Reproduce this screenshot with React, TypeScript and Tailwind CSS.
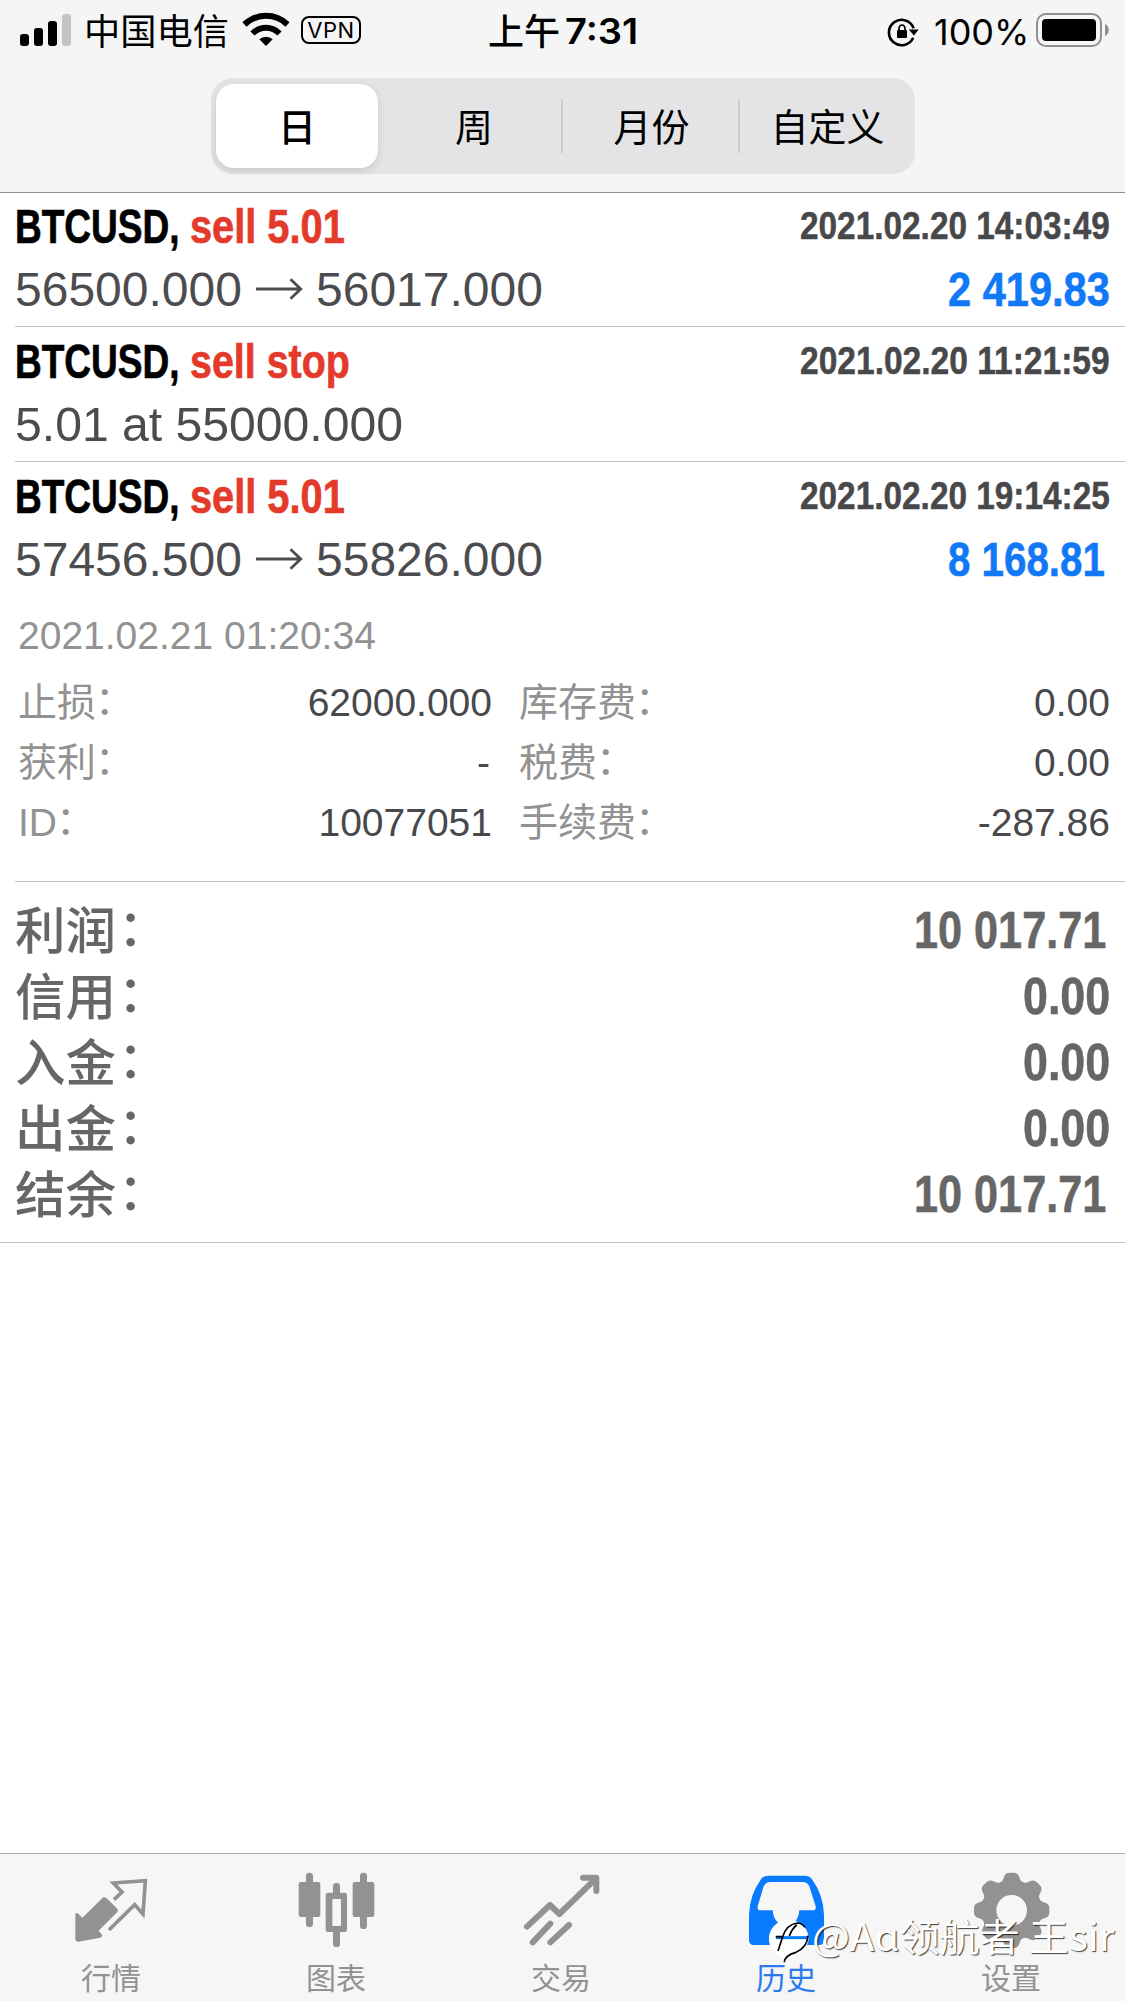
import React, { useLayoutEffect, useRef, useState } from "react";

const CJK = "font-['Noto_Sans_CJK_SC',sans-serif]";

/** One line of text squeezed or stretched horizontally to a given advance width. */
function Fit({ w, className = "", children }: { w: number; className?: string; children: React.ReactNode }) {
  const ref = useRef<HTMLSpanElement>(null);
  const [scale, setScale] = useState(1);
  useLayoutEffect(() => {
    if (ref.current && ref.current.offsetWidth) setScale(w / ref.current.offsetWidth);
  }, [w]);
  return (
    <span className="block shrink-0" style={{ width: w }}>
      <span
        ref={ref}
        className={`inline-block origin-left whitespace-pre ${className}`}
        style={{ transform: `scaleX(${scale})` }}
      >
        {children}
      </span>
    </span>
  );
}

function StatusBar() {
  return (
    <div className="flex h-[60px] items-start">
      <svg className="ml-5 mt-[14px] h-8 w-[51px]" viewBox="0 0 51 32">
        <rect x="0" y="20" width="9" height="12" rx="3" />
        <rect x="14" y="14" width="9" height="18" rx="3" />
        <rect x="28" y="7" width="9" height="25" rx="3" />
        <rect x="42" y="0" width="9" height="32" rx="3" fill="#c4c4c4" />
      </svg>
      <div className={`${CJK} ml-[13px] h-[60px]`}>
        <Fit w={145} className="text-[36px] leading-[59px]">中国电信</Fit>
      </div>
      <svg className="ml-[13px] mt-[12px] h-[35px] w-[48px]" viewBox="0 0 48 35" fill="none" stroke="#000">
        <path d="M2.5 12.5 A31 31 0 0 1 45.5 12.5" strokeWidth="6" />
        <path d="M10.5 21.5 A19 19 0 0 1 37.5 21.5" strokeWidth="6" />
        <path d="M24 34 L17.3 27.3 A9.8 9.8 0 0 1 30.7 27.3 Z" fill="#000" stroke="none" />
      </svg>
      <div className="ml-[11px] mt-4 flex h-7 w-[60px] items-center justify-center rounded-[8px] border-2 border-black font-[Inter,sans-serif] text-[22px] leading-none tracking-[0.5px]">
        VPN
      </div>
      <div className={`${CJK} ml-[127px] text-[36px] font-medium leading-[59px]`}>上午</div>
      <div className="ml-[5px] font-[Inter,sans-serif] leading-[63px]">
        <Fit w={73} className="text-[35px] font-semibold leading-[63px]">7:31</Fit>
      </div>
      <svg className="ml-[249px] mt-[17px] h-[30px] w-[33px]" viewBox="0 0 33 30" fill="none" stroke="#000">
        <path d="M26.6 11.2 A12.7 12.7 0 1 0 26.2 20.8" strokeWidth="2.6" />
        <path d="M21.8 12.5 H31.7 L26.9 18.5 Z" fill="#000" stroke="none" />
        <rect x="10" y="13" width="10" height="8" rx="1" fill="#000" stroke="none" />
        <path d="M12 14 V11.5 A3 3.5 0 0 1 18 11.5 V14" strokeWidth="1.7" />
      </svg>
      <div className="ml-[14px] font-[Inter,sans-serif] leading-[64px]">
        <Fit w={95} className="text-[36px] leading-[64px]">100%</Fit>
      </div>
      <div className="ml-[7px] mt-[13px] h-[34px] w-[66px] rounded-[10px] border-2 border-[#8f8f8f] p-1">
        <div className="h-[22px] w-[54px] rounded-[4px] bg-black" />
      </div>
      <svg className="ml-[3px] mt-[24px] h-3 w-1" viewBox="0 0 4 12">
        <path d="M0 0 C5 2 5 10 0 12 Z" fill="#8f8f8f" />
      </svg>
    </div>
  );
}

function Segments() {
  return (
    <div className={`${CJK} ml-[211px] mt-[18px] flex h-24 w-[704px] items-center rounded-[22px] bg-[#e4e4e6] text-[38px] leading-[60px]`}>
      <div className="ml-[5px] flex h-[84px] w-[162px] items-center justify-center rounded-[18px] bg-white pb-[3px] font-medium shadow-[0_3px_8px_rgba(0,0,0,0.12)]">
        日
      </div>
      <div className="flex w-[183px] items-center justify-center pb-[3px] pl-[9px]">周</div>
      <div className="h-[54px] w-[2px] bg-[#cbcbce]" />
      <div className="flex w-[175px] items-center justify-center pb-[3px] pl-[2px]">月份</div>
      <div className="h-[54px] w-[2px] bg-[#cbcbce]" />
      <div className="flex w-[175px] items-center justify-center pb-[3px]">自定义</div>
    </div>
  );
}

type Trade = {
  action: string;
  actionW: number;
  time: string;
  from?: string;
  to?: string;
  note?: string;
  profit?: string;
  profitW?: number;
};

function TradeLines({ t }: { t: Trade }) {
  return (
    <>
      <div className="flex h-[66px] justify-between pr-[15px]">
        <div className="flex text-[49px] font-bold leading-[66px]">
          <Fit w={174.5} className="text-black [-webkit-text-stroke:0.7px_#000]">{"BTCUSD, "}</Fit>
          <Fit w={t.actionW} className="text-[#e33a2b] [-webkit-text-stroke:0.7px_#e33a2b]">{t.action}</Fit>
        </div>
        <Fit w={310} className="text-[39.5px] font-bold leading-[65px] text-[#48484b] [-webkit-text-stroke:0.5px_#48484b]">{t.time}</Fit>
      </div>
      <div className="flex h-[60px] text-[48px] leading-[62px] text-[#4c4c4f]">
        {t.note ? (
          <Fit w={388}>{t.note}</Fit>
        ) : (
          <div className="flex">
            <Fit w={227}>{t.from}</Fit>
            <svg className="ml-[14px] mt-[19px] h-[22px] w-[47px]" viewBox="0 0 47 22" fill="none" stroke="#4c4c4f" strokeWidth="2.8">
              <path d="M0 11 H44.5 M34.5 1.3 L44.7 11 L34.5 20.7" />
            </svg>
            <div className="ml-[13px]">
              <Fit w={227}>{t.to}</Fit>
            </div>
          </div>
        )}
        {t.profit && (
          <div className="ml-auto w-[177px] leading-[60px]">
            <Fit w={t.profitW ?? 162} className="text-[49px] font-bold text-[#1279f6] [-webkit-text-stroke:0.6px_#1279f6]">{t.profit}</Fit>
          </div>
        )}
      </div>
    </>
  );
}

const details = [
  ["止损", "62000.000", "库存费", "0.00"],
  ["获利", "-", "税费", "0.00"],
  ["ID", "10077051", "手续费", "-287.86"],
];

const totals: [string, string, number][] = [
  ["利润", "10 017.71", 192],
  ["信用", "0.00", 87],
  ["入金", "0.00", 87],
  ["出金", "0.00", 87],
  ["结余", "10 017.71", 192],
];

const label = "font-['Liberation_Sans','Noto_Sans_CJK_SC',sans-serif] text-[#929292]";

function DetailLabel({ text }: { text: string }) {
  return (
    <div className={`${label} w-[200px]`}>
      {text}
      <span className="inline-block -translate-x-px -translate-y-[2px]">：</span>
    </div>
  );
}

function History() {
  return (
    <div className="font-['Liberation_Sans',sans-serif]">
      <div className="ml-[15px] h-[133px]">
        <TradeLines t={{ action: "sell 5.01", actionW: 155, time: "2021.02.20 14:03:49", from: "56500.000", to: "56017.000", profit: "2 419.83" }} />
      </div>
      <div className="ml-[15px] h-[135px] border-t border-[#c2c2c4] pt-px">
        <TradeLines t={{ action: "sell stop", actionW: 160, time: "2021.02.20 11:21:59", note: "5.01 at 55000.000" }} />
      </div>
      <div className="ml-[15px] h-[420px] border-t border-[#c2c2c4] pt-px">
        <TradeLines t={{ action: "sell 5.01", actionW: 155, time: "2021.02.20 19:14:25", from: "57456.500", to: "55826.000", profit: "8 168.81", profitW: 157 }} />
        <div className="pl-[3px] pt-[17px] text-[39px] leading-[60px] text-[#929292]">2021.02.21 01:20:34</div>
        <div className="mt-[7px] text-[39px] leading-[60px] text-[#48484b]">
          {details.map(([a, b, c, d]) => (
            <div key={a} className="flex h-[60px] pl-[3px]">
              <DetailLabel text={a} />
              <div className={b === "-" ? "w-[274px] pr-[2px] text-right" : "w-[274px] text-right"}>{b}</div>
              <div className="ml-[27px]">
                <DetailLabel text={c} />
              </div>
              <div className="flex-1 pr-[15px] text-right">{d}</div>
            </div>
          ))}
        </div>
      </div>
      <div className="ml-[15px] h-px bg-[#c2c2c4]" />
      <div className="flex h-[361px] flex-col border-b border-[#c2c2c4] pl-[15px] pt-[13px] text-[#666]">
        {totals.map(([name, value, w]) => (
          <div key={name} className="flex h-[66px] justify-between leading-[64px]">
            <div className={`${CJK} text-[50.5px] font-medium`}>
              {name}
              <span className="inline-block translate-x-[2px] -translate-y-[3px]">：</span>
            </div>
            <div className={w > 100 ? "pr-[19px]" : "pr-[15px]"}>
              <Fit w={w} className="pt-[3px] text-[52px] font-bold [-webkit-text-stroke:0.6px_#666]">{value}</Fit>
            </div>
          </div>
        ))}
      </div>
    </div>
  );
}

const gearTeeth = [0, 45, 90, 135, 180, 225, 270, 315];

const tabs = [
  {
    name: "行情",
    box: "0 42 675 330",
    icon: (
      <g>
        <path d="M310 172 Q315 170 320 175 L352 206 Q356 211 352 216 L296 272 L306 284 Q308 291 300 293 L236 305 Q226 305 226 297 V222 Q230 216 235 221 L247 233 Z" fill="#929292" />
        <path d="M342 179 L366 156 L340 129 L436 122 L429 222 L404 194 L327 270" fill="none" stroke="#929292" strokeWidth="11" />
      </g>
    ),
  },
  {
    name: "图表",
    box: "675 42 675 330",
    icon: (
      <g fill="#929292">
        <rect x="918" y="98" width="21" height="163" rx="10" />
        <rect x="896" y="126" width="65" height="105" rx="7" />
        <rect x="1080" y="98" width="21" height="169" rx="10" />
        <rect x="1058" y="126" width="65" height="105" rx="7" />
        <rect x="999" y="129" width="21" height="192" rx="10" />
        <rect x="977" y="158" width="64" height="118" rx="7" />
        <rect x="997" y="177" width="26" height="81" rx="3" fill="#f6f6f6" />
      </g>
    ),
  },
  {
    name: "交易",
    box: "-90 42 675 330",
    icon: (
      <g fill="none" stroke="#929292" strokeWidth="18" strokeLinecap="round" strokeLinejoin="round">
        <path d="M141 260 L210 195 L238 222 L345 118" />
        <path d="M309 113 H349 V153" />
        <path d="M158 307 L211 251 M211 307 L267 255" />
      </g>
    ),
  },
  {
    name: "历史",
    box: "585 42 675 330",
    icon: (
      <path
        fillRule="evenodd"
        fill="#0a7aff"
        d="M866 107 H974 Q990 107 997 119 Q1030 165 1032 224 V300 Q1032 315 1017 315 H822 Q807 315 807 300 V224 Q809 165 842 119 Q849 107 866 107 Z M872 126 Q857 126 851 139 L833 199 Q831 211 842 211 H878 Q882 254 918 257 Q954 254 958 211 H998 Q1009 211 1007 199 L988 139 Q982 126 968 126 Z"
      />
    ),
  },
  {
    name: "设置",
    box: "510 42 675 330",
    icon: (
      <g>
        <circle cx="845" cy="211" r="91" fill="#929292" />
        {gearTeeth.map((a) => (
          <path key={a} transform={`rotate(${a} 845 211)`} d="M802 135 Q818 128 822 111 Q826 98 838 98 H852 Q864 98 868 111 Q872 128 888 135 Z" fill="#929292" />
        ))}
        <circle cx="845" cy="211" r="46" fill="#f6f6f6" />
      </g>
    ),
  },
];

function TabBar() {
  return (
    <div className="relative flex h-[148px] border-t border-[#b0b0b2] bg-[#f6f6f6]">
      {tabs.map((t) => (
        <div key={t.name} className="w-[225px]">
          <svg className="block h-[110px] w-[225px]" viewBox={t.box}>{t.icon}</svg>
          <div className={`${CJK} -mt-[10px] pr-[3px] text-center text-[30px] leading-[44px] ${t.name === "历史" ? "text-[#2b7bef]" : "text-[#929292]"}`}>
            {t.name}
          </div>
        </div>
      ))}
      <div className="absolute left-[769px] top-[62px] flex items-start text-white">
        <svg className="h-[48px] w-[42px]" viewBox="867 228 126 144">
          <path d="M930 240 A57 57 0 0 1 986 297 Q980 340 935 353 Q918 358 913 369 L910 352 A57 57 0 0 1 930 240 Z" fill="#fff" />
          <path d="M888 293 H982" stroke="#0a7aff" strokeWidth="9" />
          <path d="M887 290 H906 M894 333 L908 290 Q920 253 952 249 Q966 249 975 262 M928 288 Q934 270 950 254 M984 287 Q982 322 948 337 Q914 346 913 367" fill="none" stroke="#000" strokeWidth="5" />
        </svg>
        <div className="-mt-[6px] ml-px font-['Noto_Sans_CJK_SC','Noto_Sans',sans-serif] leading-[50px]">
          <Fit w={302} className="text-[38px] font-normal [text-shadow:1px_1px_1px_rgba(0,0,0,0.75)]">@Aɑ领航者 王sir</Fit>
        </div>
      </div>
    </div>
  );
}

export default function App() {
  return (
    <div className="flex h-[2001px] w-[1125px] flex-col overflow-hidden bg-white text-black">
      <div className="h-[193px] border-b border-[#8e8e90] bg-[#f5f5f5]">
        <StatusBar />
        <Segments />
      </div>
      <History />
      <div className="flex-1" />
      <TabBar />
    </div>
  );
}
